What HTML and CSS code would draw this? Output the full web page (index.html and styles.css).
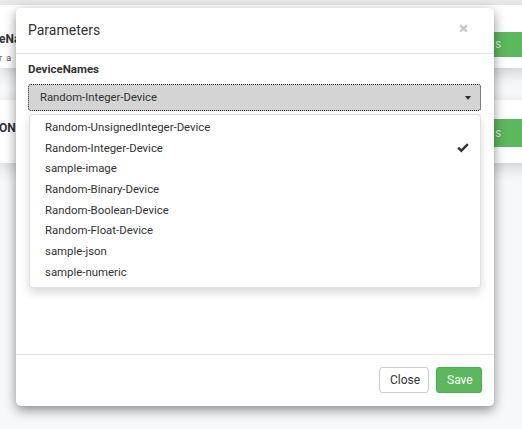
FILE: index.html
```html
<!DOCTYPE html>
<html>
<head>
<meta charset="utf-8">
<link rel="stylesheet" href="styles.css">
</head>
<body>
<div class="page">
  <div class="topbar"></div>
  <div class="card card-one">
    <div class="card-text">
      <div class="card-title">eNames</div>
      <div class="card-sub">r a sample</div>
    </div>
    <div class="card-btn">s</div>
  </div>
  <div class="card card-two">
    <div class="card-text">
      <div class="card-title">ON</div>
    </div>
    <div class="card-btn">s</div>
  </div>
</div>

<div class="modal">
  <div class="modal-header">
    <span class="modal-title">Parameters</span>
    <span class="modal-close">×</span>
  </div>
  <div class="modal-body">
    <div class="field-label">DeviceNames</div>
    <div class="select-wrap">
      <div class="select-btn">
        <span class="select-text">Random-Integer-Device</span>
        <span class="caret"></span>
      </div>
      <ul class="dropdown">
        <li class="item">Random-UnsignedInteger-Device</li>
        <li class="item selected">Random-Integer-Device
          <svg class="check" width="12" height="10" viewBox="0 0 12 10"><path d="M0.3 5.4 L2 3.8 L4.3 6 L10 0.3 L11.7 2 L4.3 9.4 Z" fill="#333"/></svg>
        </li>
        <li class="item">sample-image</li>
        <li class="item">Random-Binary-Device</li>
        <li class="item">Random-Boolean-Device</li>
        <li class="item">Random-Float-Device</li>
        <li class="item">sample-json</li>
        <li class="item">sample-numeric</li>
      </ul>
    </div>
  </div>
  <div class="modal-footer">
    <button class="btn btn-default">Close</button>
    <button class="btn btn-success">Save</button>
  </div>
</div>
</body>
</html>
```

FILE: styles.css
```css
html, body {
  margin: 0;
  padding: 0;
}
body {
  width: 522px;
  height: 429px;
  overflow: hidden;
  background: #f7f8fa;
  font-family: Roboto, "Liberation Sans", sans-serif;
  color: #333;
  position: relative;
}
.page {
  width: 563px;
  display: flex;
  flex-direction: column;
}
.topbar {
  height: 5px;
  background: #ebecee;
}
.card {
  background: #fff;
  display: flex;
  justify-content: space-between;
  box-shadow: 0 5px 14px rgba(0, 0, 0, 0.16);
}
.card-one {
  height: 63px;
  align-items: flex-start;
}
.card-two {
  margin-top: 32px;
  height: 63px;
  align-items: flex-start;
}
.card-text {
  width: 16px;
  overflow: hidden;
  white-space: nowrap;
}
.card-one .card-text { padding-top: 27px; }
.card-two .card-text { padding-top: 21px; }
.card-title {
  font-weight: bold;
  font-size: 12px;
  line-height: 14px;
  color: #333;
  margin-left: -1px;
}
.card-sub {
  font-size: 9px;
  line-height: 12px;
  margin-top: 6px;
  letter-spacing: 1px;
  color: #555;
  margin-left: -1px;
}
.card-btn {
  width: 70px;
  height: 25px;
  background: #5cb85c;
  color: #cfe9cf;
  font-size: 12px;
  line-height: 25px;
  padding-left: 2px;
  box-sizing: border-box;
}
.card-one .card-btn { margin-top: 27px; }
.card-two .card-btn { margin-top: 19px; height: 28px; line-height: 28px; }

.modal {
  position: absolute;
  top: 8px;
  left: 16px;
  width: 478px;
  height: 398px;
  background: #fff;
  border-radius: 5px;
  box-shadow: 0 4px 12px rgba(0, 0, 0, 0.45);
  display: flex;
  flex-direction: column;
}
.modal-header {
  height: 45px;
  border-bottom: 1px solid #e5e5e5;
  padding: 0 14px 0 12px;
  display: flex;
  align-items: center;
  justify-content: space-between;
}
.modal-title {
  font-size: 14px;
  color: #333;
  margin-top: -2px;
}
.modal-close {
  font-size: 17px;
  font-weight: bold;
  color: #c4c4c4;
  margin-right: 12px;
  margin-top: -4px;
  line-height: 1;
}
.modal-body {
  flex: 1;
  padding: 8px 12px 0 12px;
}
.field-label {
  font-weight: bold;
  font-size: 11.5px;
  line-height: 14px;
  margin-bottom: 8px;
}
.select-wrap {
  position: relative;
}
.select-btn {
  height: 27px;
  box-sizing: border-box;
  background: #d4d4d4;
  border-radius: 3px;
  outline: 1px dotted #222;
  outline-offset: -1px;
  display: flex;
  align-items: center;
  justify-content: space-between;
  padding: 0 10px 0 12px;
  width: 453px;
}
.select-text {
  font-size: 11.3px;
  color: #333;
}
.caret {
  width: 0;
  height: 0;
  border-left: 3.5px solid transparent;
  border-right: 3.5px solid transparent;
  border-top: 4px solid #333;
  margin-top: 1px;
}
.dropdown {
  position: absolute;
  top: 30px;
  left: 1px;
  width: 452px;
  box-sizing: border-box;
  margin: 0;
  padding: 2px 0 4px;
  list-style: none;
  background: #fff;
  border: 1px solid rgba(0, 0, 0, 0.12);
  border-radius: 4px;
  box-shadow: 0 5px 10px rgba(0, 0, 0, 0.15);
}
.item {
  height: 20.7px;
  line-height: 20.7px;
  padding: 0 15px;
  font-size: 11.4px;
  color: #333;
  position: relative;
}
.check {
  position: absolute;
  right: 11px;
  top: 5px;
}
.modal-footer {
  border-top: 1px solid #e5e5e5;
  padding: 12px 12px 13px;
  display: flex;
  justify-content: flex-end;
  gap: 7px;
}
.btn {
  height: 26px;
  font-family: Roboto, "Liberation Sans", sans-serif;
  font-size: 12px;
  border-radius: 3px;
  padding: 0 10px;
  cursor: pointer;
}
.btn-default {
  background: #fff;
  border: 1px solid #ccc;
  color: #333;
  width: 50px;
}
.btn-success {
  background: #5cb85c;
  border: 1px solid #4cae4c;
  color: #fff;
  width: 46px;
}
```
